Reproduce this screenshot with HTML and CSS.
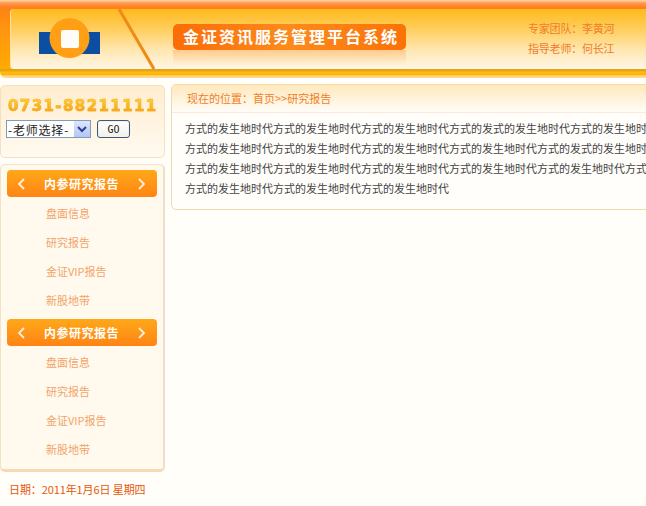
FILE: index.html
```html
<!DOCTYPE html>
<html lang="zh-CN">
<head>
    <meta charset="UTF-8">
    <meta name="viewport" content="width=device-width, initial-scale=1.0">
    <title>金证资讯服务管理平台系统</title>
    <link rel="stylesheet" href="styles.css">
</head>
<body>
    <div class="header">
        <div class="header-inner">
            <svg class="logo" width="146" height="60" viewBox="0 0 146 60">
                <path d="M109 0 L144 60" class="logo-slash"/>
                <rect x="29" y="23" width="61" height="22" fill="#0b4ea2"/>
                <circle cx="59.5" cy="29" r="20" fill="#ff9f16"/>
                <rect x="51" y="21" width="18" height="18" rx="2" fill="#fffdf6"/>
            </svg>
            <div class="title-badge">金证资讯服务管理平台系统</div>
            <div class="team">
                <div>专家团队：李黄河</div>
                <div>指导老师：何长江</div>
            </div>
        </div>
    </div>

    <div class="main">
        <div class="sidebar">
            <div class="side-box phone-box">
                <div class="phone">0731-88211111</div>
                <div class="teacher-form">
                    <div class="select-wrap">
                        <select class="teacher-select">
                            <option>-老师选择-</option>
                        </select>
                        <svg class="select-arrow" width="16" height="16" viewBox="0 0 16 16">
                            <path d="M4 6 L8 10 L12 6" fill="none" stroke="#2a3f8f" stroke-width="2"/>
                        </svg>
                    </div>
                    <button class="go-btn">GO</button>
                </div>
            </div>

            <div class="side-box menu-box">
                <div class="menu-head">
                    <svg width="8" height="12" viewBox="0 0 8 12"><path d="M7 1 L2 6 L7 11" class="chevron"/></svg>
                    <span>内参研究报告</span>
                    <svg width="8" height="12" viewBox="0 0 8 12"><path d="M1 1 L6 6 L1 11" class="chevron"/></svg>
                </div>
                <ul class="menu-list">
                    <li>盘面信息</li>
                    <li>研究报告</li>
                    <li>金证VIP报告</li>
                    <li>新股地带</li>
                </ul>
                <div class="menu-head">
                    <svg width="8" height="12" viewBox="0 0 8 12"><path d="M7 1 L2 6 L7 11" class="chevron"/></svg>
                    <span>内参研究报告</span>
                    <svg width="8" height="12" viewBox="0 0 8 12"><path d="M1 1 L6 6 L1 11" class="chevron"/></svg>
                </div>
                <ul class="menu-list">
                    <li>盘面信息</li>
                    <li>研究报告</li>
                    <li>金证VIP报告</li>
                    <li>新股地带</li>
                </ul>
            </div>

            <div class="date">日期：2011年1月6日 星期四</div>
        </div>

        <div class="content">
            <div class="content-head">现在的位置：首页&gt;&gt;研究报告</div>
            <p class="content-body">方式的发生地时代方式的发生地时代方式的发生地时代方式的发式的发生地时代方式的发生地时<br>方式的发生地时代方式的发生地时代方式的发生地时代方式的发生地时代方式的发式的发生地时<br>方式的发生地时代方式的发生地时代方式的发生地时代方式的发生地时代方式的发生地时代方式<br>方式的发生地时代方式的发生地时代方式的发生地时代</p>
        </div>
    </div>
</body>
</html>
```

FILE: styles.css
```css
* {
    margin: 0;
    padding: 0;
    box-sizing: border-box;
    font-family: "Noto Sans CJK SC", "Liberation Sans", sans-serif;
}

html, body {
    overflow: hidden;
}

body {
    width: 646px;
    height: 506px;
    background: #fffef8;
    font-size: 11px;
}

/* Header: top stripe, bottom stripes, then the orange left edge */
.header {
    height: 78px;
    padding: 9px 0 9px 10px;
    background:
        linear-gradient(#ffd9b0 0, #ff9a4c 3px, #ff7a1c 8px, #ff8a14 9px) top / 100% 9px no-repeat,
        linear-gradient(#e8a216 0, #e8a216 2px, #ffbe10 3px, #ffb000 6px, #fff0c0 7px, #ffb84a 8px, #fff6e0 9px) bottom / 100% 9px no-repeat,
        linear-gradient(#ff7a14, #ff9410 35%, #ffb000);
    border-bottom-left-radius: 6px;
}

.header-inner {
    display: flex;
    align-items: flex-start;
    height: 60px;
    background: linear-gradient(#ffb91c 0, #ffd064 22px, #ffe6ae 40px, #fff6e6 100%);
    border-radius: 4px 0 0 4px;
    box-shadow: inset 1px 0 0 #ffdf9c;
}

.logo {
    flex: none;
    margin-right: 17px;
}

.logo-slash {
    fill: none;
    stroke: #f08a12;
    stroke-width: 3;
}

.title-badge {
    position: relative;
    flex: none;
    width: 233px;
    height: 26px;
    margin-top: 15px;
    padding-left: 10px;
    border-radius: 5px;
    background: linear-gradient(90deg, #fb6d06, #fd8a1c 50%, #fb7208);
    color: #fff;
    font-size: 16px;
    font-weight: 700;
    line-height: 24px;
    letter-spacing: 2px;
    white-space: nowrap;
}

/* faded reflection under the title */
.title-badge::after {
    content: "";
    position: absolute;
    left: 0;
    right: 0;
    top: 26px;
    height: 15px;
    border-radius: 0 0 5px 5px;
    background: linear-gradient(rgba(251, 140, 50, 0.3), rgba(255, 255, 255, 0));
}

.team {
    margin: 9px 0 0 122px;
    color: #f07c2a;
    line-height: 20px;
    letter-spacing: -0.2px;
    white-space: nowrap;
}

/* Main columns */
.main {
    display: flex;
    align-items: flex-start;
    padding-top: 6px;
}

.sidebar {
    flex: none;
    width: 165px;
    margin-top: 1px;
    margin-right: 6px;
}

.side-box {
    border: 1px solid #f6dfc0;
    border-radius: 5px;
}

.phone-box {
    height: 73px;
    padding: 12px 0 0 7px;
    background: linear-gradient(#ffedcf, #fffaf0);
}

.phone {
    height: 16px;
    font-family: "DejaVu Sans", sans-serif;
    font-size: 15px;
    font-weight: 700;
    line-height: 16px;
    letter-spacing: 1.4px;
    white-space: nowrap;
    background: linear-gradient(#ffd23a, #f59a10);
    -webkit-background-clip: text;
    background-clip: text;
    color: transparent;
    -webkit-text-stroke: 0.5px #f7b020;
}

.teacher-form {
    display: flex;
    gap: 6px;
    margin-top: 6px;
    margin-left: -2px;
}

.select-wrap {
    position: relative;
    width: 85px;
    height: 18px;
}

.teacher-select {
    appearance: none;
    width: 100%;
    height: 100%;
    padding-left: 1px;
    border: 1px solid #7f9db9;
    border-radius: 0;
    background: #fff;
    color: #222;
    font-size: 12px;
    letter-spacing: 0.8px;
}

.select-arrow {
    position: absolute;
    right: 1px;
    top: 1px;
    background: linear-gradient(#dde6fb, #b4c6f5);
    pointer-events: none;
}

.go-btn {
    width: 33px;
    height: 18px;
    border: 1px solid #3d5a73;
    border-radius: 3px;
    background: linear-gradient(#fff, #f2f0e6);
    box-shadow: inset 0 0 0 1px #eef2f6;
    color: #222;
    font-family: "DejaVu Sans Mono", monospace;
    font-size: 10px;
}

.menu-box {
    height: 308px;
    margin-top: 6px;
    padding: 5px 6px 0;
    background: #fff9ee;
    border-width: 1px 2px 3px 1px;
    border-color: #f3e2c8 #efdfc6 #f8d9b4 #f3e2c8;
}

.menu-head {
    display: flex;
    align-items: center;
    justify-content: space-between;
    height: 27px;
    padding: 0 11px 0 10px;
    border-radius: 4px;
    background: linear-gradient(#ffa818, #ff8414);
    color: #fff;
    font-size: 12px;
    font-weight: 700;
    letter-spacing: 0.5px;
}

.chevron {
    fill: none;
    stroke: #ffeeda;
    stroke-width: 1.8;
}

.menu-list {
    list-style: none;
    padding: 2px 0 0 39px;
    height: 122px;
    color: #f2a468;
}

.menu-list li {
    height: 29px;
    line-height: 29px;
}

.date {
    margin: 9px 0 0 9px;
    color: #e8570f;
    line-height: 16px;
    letter-spacing: -0.1px;
    white-space: nowrap;
}

/* Right side card */
.content {
    flex: none;
    width: 490px;
    height: 126px;
    border: 1px solid #f2d9ae;
    border-radius: 5px;
    background: #fffefb;
}

.content-head {
    height: 28px;
    padding-left: 15px;
    border-bottom: 1px solid #fde9dc;
    background: linear-gradient(#ffe8bc, #fffdf8);
    color: #f0801e;
    line-height: 26px;
}

.content-body {
    padding: 5px 0 0 13px;
    color: #444;
    line-height: 20px;
    white-space: nowrap;
}
```
